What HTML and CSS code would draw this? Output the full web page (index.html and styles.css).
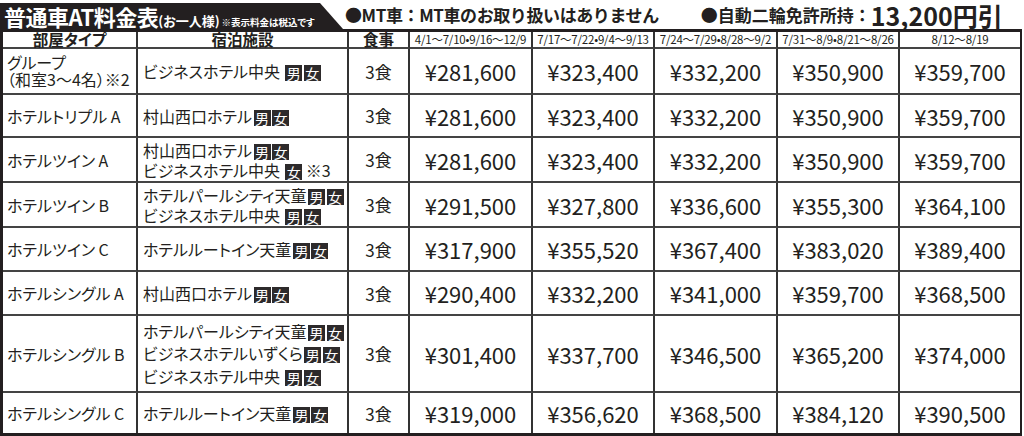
FILE: index.html
```html
<!DOCTYPE html>
<html lang="ja">
<head>
<meta charset="utf-8">
<link rel="stylesheet" href="styles.css">
</head>
<body>
<div class="top">
  <div class="tab"><span class="t1">普通車AT料金表</span><span class="t2">(お一人様)</span><span class="t3">※表示料金は税込です</span></div>
  <div class="note n1">●MT車：MT車のお取り扱いはありません</div>
  <div class="note n2">●自動二輪免許所持：<span class="big">13,200円引</span></div>
</div>
<table class="tbl">
  <colgroup>
    <col class="c1"><col class="c2"><col class="c3"><col class="c4"><col class="c5"><col class="c6"><col class="c7"><col class="c8">
  </colgroup>
  <tr class="hd">
    <td class="h">部屋タイプ</td>
    <td class="h">宿泊施設</td>
    <td class="h">食事</td>
    <td class="d">4/1〜7/10•9/16〜12/9</td>
    <td class="d">7/17〜7/22•9/4〜9/13</td>
    <td class="d">7/24〜7/29•8/28〜9/2</td>
    <td class="d">7/31〜8/9•8/21〜8/26</td>
    <td class="d">8/12〜8/19</td>
  </tr>
  <tr class="r1">
    <td class="type two">グループ<br>（和室3〜4名）※2</td>
    <td class="hotel">ビジネスホテル中央 <span class="b">男</span><span class="b">女</span></td>
    <td class="meal">3食</td>
    <td class="p">¥281,600</td><td class="p">¥323,400</td><td class="p">¥332,200</td><td class="p">¥350,900</td><td class="p">¥359,700</td>
  </tr>
  <tr class="r2">
    <td class="type">ホテルトリプル A</td>
    <td class="hotel">村山西口ホテル<span class="b">男</span><span class="b">女</span></td>
    <td class="meal">3食</td>
    <td class="p">¥281,600</td><td class="p">¥323,400</td><td class="p">¥332,200</td><td class="p">¥350,900</td><td class="p">¥359,700</td>
  </tr>
  <tr class="r3">
    <td class="type">ホテルツイン A</td>
    <td class="hotel">村山西口ホテル<span class="b">男</span><span class="b">女</span><br>ビジネスホテル中央 <span class="b">女</span> ※3</td>
    <td class="meal">3食</td>
    <td class="p">¥281,600</td><td class="p">¥323,400</td><td class="p">¥332,200</td><td class="p">¥350,900</td><td class="p">¥359,700</td>
  </tr>
  <tr class="r4">
    <td class="type">ホテルツイン B</td>
    <td class="hotel">ホテルパールシティ天童<span class="b">男</span><span class="b">女</span><br>ビジネスホテル中央 <span class="b">男</span><span class="b">女</span></td>
    <td class="meal">3食</td>
    <td class="p">¥291,500</td><td class="p">¥327,800</td><td class="p">¥336,600</td><td class="p">¥355,300</td><td class="p">¥364,100</td>
  </tr>
  <tr class="r5">
    <td class="type">ホテルツイン C</td>
    <td class="hotel">ホテルルートイン天童<span class="b">男</span><span class="b">女</span></td>
    <td class="meal">3食</td>
    <td class="p">¥317,900</td><td class="p">¥355,520</td><td class="p">¥367,400</td><td class="p">¥383,020</td><td class="p">¥389,400</td>
  </tr>
  <tr class="r6">
    <td class="type">ホテルシングル A</td>
    <td class="hotel">村山西口ホテル<span class="b">男</span><span class="b">女</span></td>
    <td class="meal">3食</td>
    <td class="p">¥290,400</td><td class="p">¥332,200</td><td class="p">¥341,000</td><td class="p">¥359,700</td><td class="p">¥368,500</td>
  </tr>
  <tr class="r7">
    <td class="type">ホテルシングル B</td>
    <td class="hotel three">ホテルパールシティ天童<span class="b">男</span><span class="b">女</span><br>ビジネスホテルいずくら<span class="b">男</span><span class="b">女</span><br>ビジネスホテル中央 <span class="b">男</span><span class="b">女</span></td>
    <td class="meal">3食</td>
    <td class="p">¥301,400</td><td class="p">¥337,700</td><td class="p">¥346,500</td><td class="p">¥365,200</td><td class="p">¥374,000</td>
  </tr>
  <tr class="r8">
    <td class="type">ホテルシングル C</td>
    <td class="hotel">ホテルルートイン天童<span class="b">男</span><span class="b">女</span></td>
    <td class="meal">3食</td>
    <td class="p">¥319,000</td><td class="p">¥356,620</td><td class="p">¥368,500</td><td class="p">¥384,120</td><td class="p">¥390,500</td>
  </tr>
</table>
</body>
</html>
```
FILE: styles.css
```css
* { box-sizing: border-box; }
body {
  margin: 0;
  background: #fff;
  color: #231f20;
  font-family: "Noto Sans CJK JP", "Noto Sans", sans-serif;
  font-feature-settings: "palt";
}
.top {
  height: 29px;
  display: flex;
  align-items: flex-end;
}
.tab {
  width: 343px;
  height: 26px;
  background: #231f20;
  color: #fff;
  clip-path: polygon(0 0, 320px 0, 343px 100%, 0 100%);
  display: flex;
  align-items: baseline;
  padding-left: 4px;
  white-space: nowrap;
}
.t1 { font-size: 22px; font-weight: 700; line-height: 26px; letter-spacing: -0.5px; }
.t2 { font-size: 13px; font-weight: 700; }
.t3 { font-size: 9.5px; font-weight: 700; margin-left: 2px; }
.note {
  height: 29px;
  display: flex;
  align-items: center;
  font-size: 17px;
  font-weight: 700;
  line-height: 24px;
  white-space: nowrap;
  font-feature-settings: normal;
}
.n1 { margin-left: 2px; letter-spacing: -0.4px; }
.n2 { margin-left: 42px; }
.big { font-size: 25px; line-height: 28px; }

.tbl {
  border-spacing: 0;
  table-layout: fixed;
  width: 1022px;
  border-top: 3px solid #231f20;
  border-left: 3px solid #231f20;
  border-bottom: 3px solid #231f20;
  border-right: 2px solid #231f20;
}
.c1 { width: 135px; }
.c2 { width: 211px; }
.c3 { width: 61px; }
.c4 { width: 123px; }
.c5 { width: 122px; }
.c6 { width: 123px; }
.c7 { width: 122px; }
.c8 { width: 120px; }
.tbl td {
  padding: 0;
  border-right: 2px solid #333;
  border-bottom: 2px solid #444;
  vertical-align: middle;
  white-space: nowrap;
}
.tbl td:last-child { border-right: 0; }
.tbl tr:last-child td { border-bottom: 0; }

.hd td { height: 17px; }
.r1 td { height: 46px; }
.r2 td { height: 43px; }
.r3 td { height: 45px; }
.r4 td { height: 45px; }
.r5 td { height: 44px; }
.r6 td { height: 44px; }
.r7 td { height: 77px; }
.r8 td { height: 40px; }

.h {
  font-size: 15.5px;
  font-weight: 700;
  line-height: 15px;
  text-align: center;
}
.d {
  font-size: 11.5px;
  line-height: 15px;
  text-align: center;
  letter-spacing: -0.2px;
}
.type {
  font-size: 16px;
  line-height: 20px;
  padding-left: 4px !important;
}
.type.two { line-height: 17px; }
.hotel {
  font-size: 16px;
  line-height: 20px;
  padding-left: 5px !important;
}
.hotel.three { line-height: 22.5px; }
.meal {
  font-size: 17px;
  text-align: center;
}
.p {
  font-size: 22px;
  text-align: center;
}
.b {
  display: inline-block;
  width: 17px;
  height: 16px;
  margin-left: 1.5px;
  background: #2d2a2b;
  color: #fff;
  font-size: 14px;
  line-height: 16px;
  text-align: center;
  vertical-align: -1px;
}
```
